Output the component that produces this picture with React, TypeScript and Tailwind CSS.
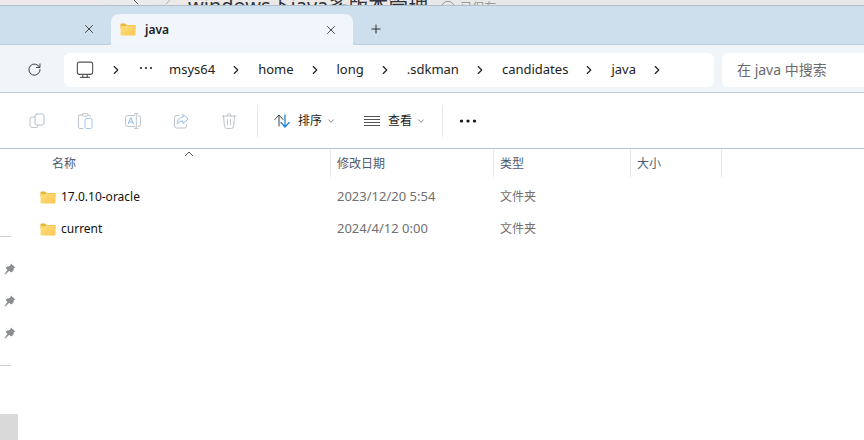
import type { ReactNode } from 'react';
import { ChevronDown, ChevronLeft, ChevronRight, CircleCheck, Plus, X } from 'lucide-react';

interface Folder {
  name: string;
  modified: string;
  type: string;
}

const path = ['msys64', 'home', 'long', '.sdkman', 'candidates', 'java'];

const folders: Folder[] = [
  { name: '17.0.10-oracle', modified: '2023/12/20 5:54', type: '文件夹' },
  { name: 'current', modified: '2024/4/12 0:00', type: '文件夹' },
];

function Icon({ children, className = 'w-4 h-4' }: { children: ReactNode; className?: string }) {
  return (
    <svg viewBox="0 0 16 16" fill="none" stroke="currentColor" strokeLinecap="round" strokeLinejoin="round" className={`shrink-0 ${className}`} aria-hidden="true">
      {children}
    </svg>
  );
}

function FolderIcon() {
  return (
    <svg viewBox="0 0 16 13" className="w-4 h-[13px] shrink-0" aria-hidden="true">
      <defs>
        <linearGradient id="folder" x1="0" y1="0" x2="1" y2="1">
          <stop offset="0" stopColor="#ffdf85" />
          <stop offset="1" stopColor="#f9c74c" />
        </linearGradient>
      </defs>
      <path d="M.5 1.500a1 1 0 0 1 1-1h3.600l1.400 1.500h8.200a.8.8 0 0 1 .8.800V6H.5z" fill="#eeb32f" />
      <path d="M.5 3.200h4.500l1.200-.7h8.600a.7.7 0 0 1 .7.700v8.200a1 1 0 0 1-1 1h-13a1 1 0 0 1-1-1z" fill="url(#folder)" />
    </svg>
  );
}

function Pin() {
  return (
    <svg viewBox="0 0 12 12" className="w-3 h-3" aria-hidden="true">
      <path d="M7 .5l4.500 4.200-1.500.4-.8 3-2.200 1.500-1.700-1.800L1.200 11.600l-.8-.6 3-4L1.600 4.900l1.600-1.500L6 3z" fill="#8b8f94" />
    </svg>
  );
}

// Sliver of the note editor that shows above the explorer window
function BackgroundWindow() {
  return (
    <header className="flex h-[5px] items-start overflow-hidden bg-linear-to-r from-[#efeae7] to-[#e8e8e8] to-60% pl-32 text-[#30343c]">
      <div className="-mt-1 flex h-5 items-center whitespace-nowrap">
        <ChevronLeft className="w-4 h-6 -mt-3 text-[#555]" strokeWidth={1.5} />
        <ChevronRight className="ml-4 mr-3 w-4 h-6 -mt-3 text-[#aaa]" strokeWidth={1.5} />
        <span className="text-[20px] leading-5">windows下java多版本管理</span>
        <CircleCheck className="ml-3 mr-1 mt-1 w-4 h-4 text-[#999]" strokeWidth={1.5} />
        <span className="mt-1 text-[12px] leading-4 text-[#999]">已保存</span>
      </div>
    </header>
  );
}

function TabStrip() {
  return (
    <div className="flex h-10 border-t border-[#aebfce] bg-[#cddeec]">
      <div className="flex w-[111px] items-center justify-end rounded-br border-b border-[#bccddc] pr-[15px] pt-2">
        <button aria-label="关闭其他标签页" className="text-[#333]"><X className="w-3.5 h-3.5" strokeWidth={1.5} /></button>
      </div>
      <div className="mt-2 flex w-[242px] items-center rounded-t-lg bg-[#f0f6fc] pl-[9px] pr-[15px]">
        <FolderIcon />
        <span className="ml-[9px] flex-1 text-[12px] font-semibold text-[#1b1b1b]">java</span>
        <button aria-label="关闭标签页" className="text-[#333]"><X className="w-3.5 h-3.5" strokeWidth={1.5} /></button>
      </div>
      <div className="flex flex-1 items-center rounded-bl border-b border-[#bccddc] pl-4 pt-2">
        <button aria-label="新建标签页" className="text-[#333]"><Plus className="w-3.5 h-3.5" strokeWidth={1.8} /></button>
      </div>
    </div>
  );
}

function AddressBar() {
  return (
    <div className="flex h-12 items-center border-b border-[#bccad6] bg-[#f0f5fa] pt-0.5">
      <button aria-label="刷新" className="flex w-16 justify-center pl-1 text-[#333]">
        <Icon className="w-[15px] h-[15px]">
          <path d="M13.4 5.5A6 6 0 1 0 14 8" />
          <path d="M13.8 2v3.8H10" />
        </Icon>
      </button>
      <nav aria-label="路径" className="flex h-[34px] min-w-0 flex-1 items-center rounded-md bg-white pl-3 text-[13px] text-[#222]">
        <Icon className="mr-[15px] h-[18px] w-[18px] text-[#555]">
          <rect x="1.2" y="1" width="13.6" height="10.9" rx="1.8" />
          <path d="M6 12v2.200M10 12v2.200M4 14.500h8" />
        </Icon>
        <ChevronRight className="w-3.5 h-3.5" strokeWidth={2} />
        <button aria-label="更多路径" className="mx-[15px] mb-1">
          <svg viewBox="0 0 16 6" className="h-1.5 w-4" fill="currentColor" aria-hidden="true">
            <circle cx="3" cy="3" r="1.100" />
            <circle cx="8" cy="3" r="1.100" />
            <circle cx="13" cy="3" r="1.100" />
          </svg>
        </button>
        {path.map((part) => (
          <span key={part} className="flex items-center">
            <a href="#" className="mr-3.5">{part}</a>
            <ChevronRight className="mr-[15px] w-3.5 h-3.5" strokeWidth={2} />
          </span>
        ))}
      </nav>
      <input
        type="search"
        aria-label="搜索"
        placeholder="在 java 中搜索"
        className="ml-2 h-[34px] w-[142px] rounded-l-md bg-white pl-[15px] text-[14px] text-[#333] outline-none placeholder:text-[#6a6a6a]"
      />
    </div>
  );
}

function Toolbar() {
  return (
    <div className="flex h-14 items-center border-b border-[#b9c3d0] bg-white text-[12px] text-[#222]">
      <div className="flex gap-8 pl-[29px] pr-5 text-[#bcc3ca]">
        <button aria-label="复制">
          <Icon>
            <rect x="6" y="1" width="9" height="11" rx="2" stroke="#b3c3d2" />
            <path d="M6 4H3a2 2 0 0 0-2 2v6.500a2 2 0 0 0 2 2h4a2 2 0 0 0 2-2" />
          </Icon>
        </button>
        <button aria-label="粘贴">
          <Icon>
            <path d="M5 2H3a1.500 1.500 0 0 0-1.500 1.500v10.500A1.500 1.500 0 0 0 3 15.500h3M11 2h1a1.500 1.500 0 0 1 1.500 1.500" />
            <rect x="5" y=".6" width="6" height="2.600" rx="1.300" />
            <rect x="8" y="5.500" width="7" height="10" rx="1.500" stroke="#9cc6ec" />
          </Icon>
        </button>
        <button aria-label="重命名">
          <Icon>
            <path d="M9.500 2.500H2.500a2 2 0 0 0-2 2v7a2 2 0 0 0 2 2h7M13.200 2.500a2 2 0 0 1 2.300 2v7a2 2 0 0 1-2.300 2M9.500 .6h3.500M9.500 15.400h3.500M11.300 .6v14.800" />
            <path d="M3.200 11l2.600-6.500L8.400 11M4.200 9h3.200" stroke="#8bbce9" />
          </Icon>
        </button>
        <button aria-label="共享">
          <Icon>
            <path d="M6 2.500H3.500a2 2 0 0 0-2 2V13a2 2 0 0 0 2 2h8a2 2 0 0 0 2-2v-1.500" />
            <path d="M10 1.500L15.200 6 10 10.500V8C7 8 5.500 9 4.200 11 4.500 7 6.500 4.200 10 4z" stroke="#9cbfe0" />
          </Icon>
        </button>
        <button aria-label="删除">
          <Icon>
            <path d="M1.200 3h13.600M5.800 3a2.200 2.200 0 0 1 4.400 0M2.500 3l1 10.500a2 2 0 0 0 2 1.900h5a2 2 0 0 0 2-1.900l1-10.500M6.500 6.500v5M9.500 6.500v5" />
          </Icon>
        </button>
      </div>
      <button className="flex h-8 items-center border-l border-[#e6e8eb] pl-4">
        <Icon className="w-4 h-4 text-[#444]">
          <path d="M5 13V2.500M.8 6.500L5 2l4 4.500" />
          <path d="M11 2v11.500M7 9.500l4 4.500 4.200-4.500" stroke="#2483d1" strokeWidth="1.300" />
        </Icon>
        <span className="ml-2">排序</span>
        <ChevronDown className="ml-1 w-2.5 h-2.5 text-[#777]" />
      </button>
      <button className="ml-7 flex h-8 items-center border-r border-[#e6e8eb] pr-4">
        <Icon className="w-4 h-4 text-[#555]">
          <path d="M0 3.500h16M0 6.500h16M0 9.500h16M0 12.500h16" />
        </Icon>
        <span className="ml-2">查看</span>
        <ChevronDown className="ml-1 w-2.5 h-2.5 text-[#777]" />
      </button>
      <button aria-label="更多" className="ml-4">
        <svg viewBox="0 0 18 6" className="h-1.5 w-[18px]" fill="#111" aria-hidden="true">
          <circle cx="2.500" cy="3" r="1.600" />
          <circle cx="9" cy="3" r="1.600" />
          <circle cx="15.500" cy="3" r="1.600" />
        </svg>
      </button>
    </div>
  );
}

function Sidebar() {
  return (
    <aside className="flex w-6 shrink-0 flex-col">
      <div className="mt-[87px] w-[11px] border-t border-[#cfcfcf]" />
      <div className="mt-[26px] flex flex-col gap-5 pl-1">
        <Pin />
        <Pin />
        <Pin />
      </div>
      <div className="mt-[26px] w-[11px] border-t border-[#d5d0d0]" />
      <div className="mt-12 w-[18px] flex-1 bg-[#d9d9d9]" />
    </aside>
  );
}

function FileList() {
  return (
    <main className="min-w-0 flex-1">
      <table className="w-full table-fixed border-separate border-spacing-0 text-left text-[12px]">
        <colgroup>
          <col className="w-[307px]" />
          <col className="w-[163px]" />
          <col className="w-[137px]" />
          <col className="w-[91px]" />
          <col />
        </colgroup>
        <thead className="text-[#4c5b70]">
          <tr className="h-7">
            <th className="relative border-r border-[#e6e8eb] pl-7 pt-0.5 font-normal">
              名称
              <svg viewBox="0 0 10 6" className="absolute left-[160px] top-0.5 h-1.5 w-2.5" fill="none" stroke="#555" aria-hidden="true">
                <path d="M1 5l4-4 4 4" />
              </svg>
            </th>
            <th className="border-r border-[#e6e8eb] pl-1.5 pt-0.5 font-normal">修改日期</th>
            <th className="border-r border-[#e6e8eb] pl-1.5 pt-0.5 font-normal">类型</th>
            <th className="border-r border-[#e6e8eb] pl-1.5 pt-0.5 font-normal">大小</th>
            <th />
          </tr>
        </thead>
        <tbody className="text-[#707070]">
          <tr className="h-1"><td colSpan={5} /></tr>
          {folders.map((folder) => (
            <tr key={folder.name} className="h-8">
              <td className="pl-4">
                <div className="flex items-center gap-[5px] text-[#111]">
                  <FolderIcon />
                  {folder.name}
                </div>
              </td>
              <td className="pl-1.5 text-[13px]">{folder.modified}</td>
              <td className="pl-1.5">{folder.type}</td>
              <td />
              <td />
            </tr>
          ))}
        </tbody>
      </table>
    </main>
  );
}

export default function App() {
  return (
    <div className="flex min-h-screen flex-col bg-white font-['Noto_Sans','Noto_Sans_CJK_SC',sans-serif]">
      <BackgroundWindow />
      <TabStrip />
      <AddressBar />
      <Toolbar />
      <div className="flex flex-1">
        <Sidebar />
        <FileList />
      </div>
    </div>
  );
}
